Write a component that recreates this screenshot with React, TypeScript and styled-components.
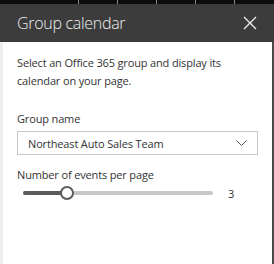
import styled, { createGlobalStyle } from "styled-components";

const Global = createGlobalStyle`
  html, body {
    margin: 0;
    padding: 0;
    background: #ffffff;
  }
  body {
    font-family: "Open Sans", "Noto Sans", sans-serif;
  }
`;

const Frame = styled.div`
  width: 274px;
  height: 264px;
  display: flex;
  flex-direction: column;
  background: #ffffff;
  overflow: hidden;
`;

const Ruler = styled.div`
  height: 4px;
  background: #0c0c0c;
  display: flex;
  padding-left: 78px;
  gap: 38px;
`;

const Tick = styled.span`
  width: 1px;
  height: 4px;
  background: #8a8a8a;
`;

const Panel = styled.div`
  flex: 1;
  display: flex;
  flex-direction: column;
  border-left: 3px solid #efefef;
  border-right: 2px solid #4a4a4a;
`;

const Header = styled.div`
  height: 38px;
  background: #3c3c3c;
  display: flex;
  align-items: center;
  justify-content: space-between;
  margin-left: -3px;
  margin-right: -2px;
  padding: 0 17px;
`;

const Title = styled.h1`
  margin: 0;
  color: #f0f0f0;
  font-size: 16px;
  font-weight: 300;
  letter-spacing: -0.3px;
`;

const Close = styled.button`
  border: 0;
  background: none;
  padding: 0;
  width: 14px;
  height: 14px;
  display: flex;
  cursor: pointer;
`;

const Body = styled.div`
  padding: 12px 14px 0 14px;
  display: flex;
  flex-direction: column;
`;

const Text = `
  font-size: 11px;
  letter-spacing: -0.15px;
  color: #333333;
`;

const Intro = styled.p`
  ${Text}
  margin: 0 0 21px 0;
  line-height: 18px;
`;

const Label = styled.div`
  ${Text}
  line-height: 16px;
  margin-bottom: 4px;
`;

const Select = styled.div`
  ${Text}
  height: 22px;
  border: 1px solid #c8c8c8;
  display: flex;
  align-items: center;
  justify-content: space-between;
  padding: 0 10px;
  margin-bottom: 12px;
`;

const SliderRow = styled.div`
  display: flex;
  align-items: center;
  padding-left: 6px;
  height: 12px;
`;

const Track = styled.div`
  position: relative;
  width: 190px;
  height: 4px;
  border-radius: 2px;
  background: #c8c8c8;
`;

const Fill = styled.div`
  height: 4px;
  border-radius: 2px;
  background: #5c5c5c;
`;

const Thumb = styled.span`
  position: absolute;
  top: -5px;
  width: 10px;
  height: 10px;
  margin-left: -7px;
  border: 2px solid #5c5c5c;
  border-radius: 50%;
  background: #ffffff;
`;

const Value = styled.span`
  ${Text}
  margin-left: 15px;
`;

export default function App() {
  const pct = 23;
  return (
    <Frame>
      <Global />
      <Ruler>
        {[0, 1, 2, 3, 4].map((i) => (
          <Tick key={i} />
        ))}
      </Ruler>
      <Panel>
        <Header>
          <Title>Group calendar</Title>
          <Close aria-label="Close">
            <svg width="14" height="14" viewBox="0 0 14 14">
              <path d="M1 1 L13 13 M13 1 L1 13" stroke="#f0f0f0" strokeWidth="1.3" />
            </svg>
          </Close>
        </Header>
        <Body>
          <Intro>Select an Office 365 group and display its calendar on your page.</Intro>
          <Label>Group name</Label>
          <Select>
            <span>Northeast Auto Sales Team</span>
            <svg width="11" height="6" viewBox="0 0 11 6">
              <path d="M0.5 0.5 L5.5 5.5 L10.5 0.5" stroke="#555" strokeWidth="1" fill="none" />
            </svg>
          </Select>
          <Label>Number of events per page</Label>
          <SliderRow>
            <Track>
              <Fill style={{ width: `${pct}%` }} />
              <Thumb style={{ left: `${pct}%` }} />
            </Track>
            <Value>3</Value>
          </SliderRow>
        </Body>
      </Panel>
    </Frame>
  );
}
